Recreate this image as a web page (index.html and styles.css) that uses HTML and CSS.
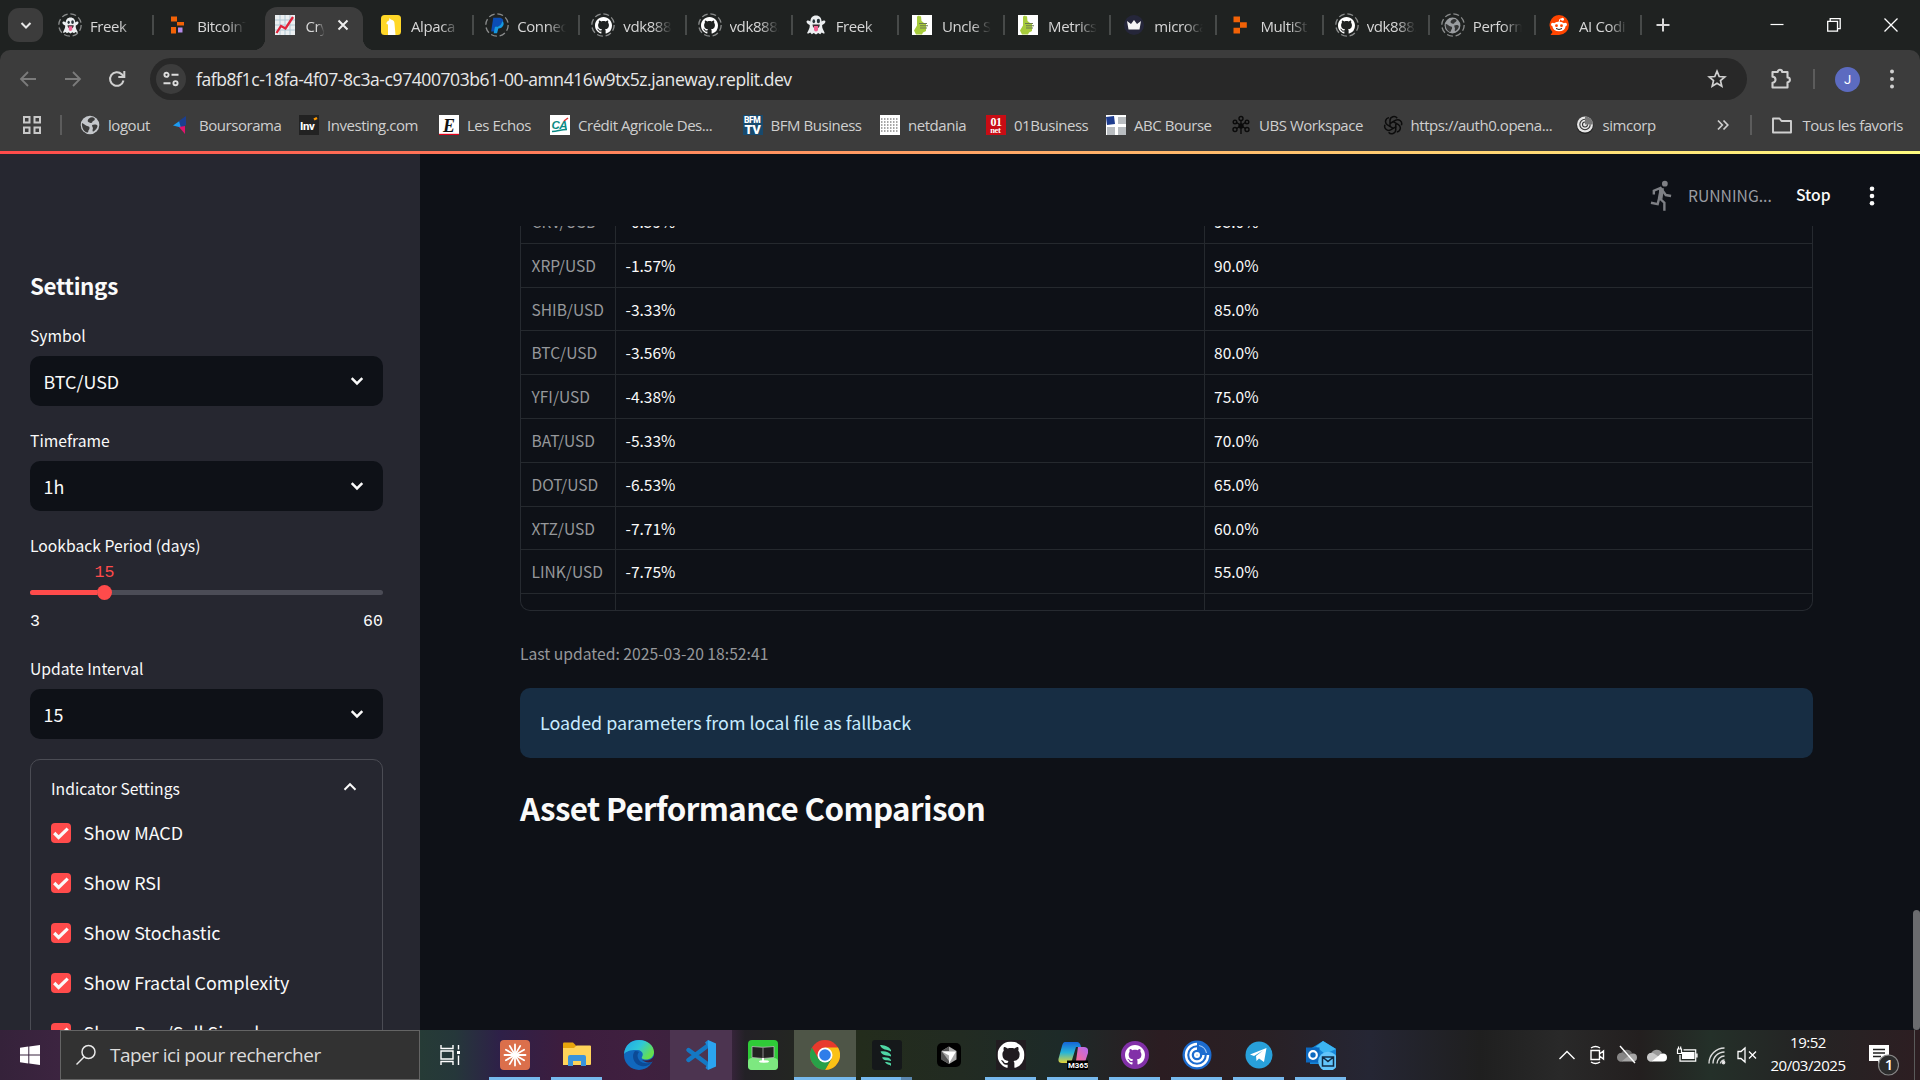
FILE: index.html
```html
<!DOCTYPE html>
<html lang="fr">
<head>
<meta charset="utf-8">
<title>Crypto dashboard</title>
<link rel="stylesheet" href="styles.css">
</head>
<body>
<svg class="defs" width="0" height="0" aria-hidden="true">
  <defs>
    <symbol id="github" viewBox="0 0 16 16"><path fill="#fff" d="M8 0C3.58 0 0 3.58 0 8c0 3.54 2.29 6.53 5.47 7.59.4.07.55-.17.55-.38 0-.19-.01-.82-.01-1.49-2.01.37-2.53-.49-2.69-.94-.09-.23-.48-.94-.82-1.13-.28-.15-.68-.52-.01-.53.63-.01 1.08.58 1.23.82.72 1.21 1.87.87 2.33.66.07-.52.28-.87.51-1.07-1.78-.2-3.64-.89-3.64-3.95 0-.87.31-1.59.82-2.15-.08-.2-.36-1.02.08-2.12 0 0 .67-.21 2.2.82.64-.18 1.32-.27 2-.27s1.36.09 2 .27c1.53-1.04 2.2-.82 2.2-.82.44 1.1.16 1.92.08 2.12.51.56.82 1.27.82 2.15 0 3.07-1.87 3.75-3.65 3.95.29.25.54.73.54 1.48 0 1.07-.01 1.93-.01 2.2 0 .21.15.46.55.38A8.01 8.01 0 0 0 16 8c0-4.42-3.58-8-8-8z"/></symbol>
    <symbol id="ghost" viewBox="0 0 20 20"><path fill="#eceff1" d="M10 0.5c-3.6 0-5.6 2.6-5.6 6-1.2-.9-2.6-1.6-3.6-.6-1 1.1.6 2.6 2.9 4.2.4 3-1.2 4.800-2.400 7.500-.3.8.4 1.300 1.200.800l1.700-.9 1.600 1.700 2-1.300 2.200 1.500 2.200-1.500 2 1.300 1.600-1.700 1.500.9c.8.400 1.500-.1 1.200-.8-1.200-2.700-2.700-4.500-2.300-7.500 2.300-1.600 3.900-3.100 2.900-4.200-1-1-2.400-.3-3.500.6 0-3.400-2-6-5.600-6z"/><ellipse cx="7.800" cy="6.300" rx="1.300" ry="2" fill="#263238"/><ellipse cx="12.400" cy="6" rx="1.600" ry="2.300" fill="#263238"/><path fill="#3b2b30" d="M6.500 9.600h7.300c0 2.800-1.500 4-3.600 4s-3.700-1.400-3.700-4z"/><path fill="#f06292" d="M8 11h4v3.500a2 2 0 0 1-4 0z"/></symbol>
    <symbol id="ring" viewBox="0 0 24 24"><circle cx="12" cy="12" r="11.200" fill="none" stroke="#8a8c8c" stroke-width="1.300" stroke-dasharray="6 2.800"/></symbol>
    <symbol id="globe" viewBox="0 0 20 20"><circle cx="10" cy="10" r="9.300" fill="#c4c7cb"/><path fill="#3c3c3c" d="M2 8c3 1 3.500 3 6 3.200 2 0 2 3 .4 4.200 0 1.500-.4 2-1.400 2.200C3.500 16.500 1.500 12 2 8zM9 3.500c2-1.500 4-1.400 5.500-.3 1 1.500-.5 2.500-2 3.200-.5 2.200-3 1.700-4.200.7C7 6 8 4.500 9 3.500zM12 10c2-1 5-.8 5.500.8 0 2.500-2.500 5-4.500 6-1.200-1.800.8-3-.6-4.700z"/></symbol>
    <symbol id="replit" viewBox="0 0 20 20"><path fill="#f26207" d="M3.500 1.500h6.500v5.700H3.500zM10 7.200h6.800v5.600H10zM3.500 12.800h6.500v5.700H3.500z"/></symbol>
    <symbol id="lime" viewBox="0 0 20 20"><path fill="#fff" d="M0 0h20v20H0z"/><path fill="#a8cc3c" d="M5 1.500l2-1 1 1 1-.5.500 5 2.500 2 2 1v7l-3 1.500-1 2H4l-2-4 3-5V6z"/><path fill="#6c7a50" d="M7 8h8v1H7zm1 2.200h8v1H8zm0 2.200h7v1H8z"/></symbol>
    <symbol id="chev" viewBox="0 0 16 16"><path d="M2.700 5.200L8 10.400l5.300-5.200" fill="none" stroke="#fafafa" stroke-width="2.500"/></symbol>
    <symbol id="check" viewBox="0 0 20 20"><path d="M3.200 10l4.400 4.400L16.700 5.600" fill="none" stroke="#fafafa" stroke-width="3.200"/></symbol>
    <symbol id="cloud" viewBox="0 0 20 14"><path fill="#999" d="M4 6a6 6 0 0 1 11-1l-5 6H3z"/><path fill="#c8c8c8" d="M0 9.500A4.500 4.500 0 0 1 7 5.500l6 4-8 4A4 4 0 0 1 0 9.500z"/><path fill="#fff" d="M4.500 13.500H16a4 4 0 0 0 0-8c-2-.2-3 .8-4 2z"/></symbol>
  </defs>
</svg>
<div class="screen">
  <header class="browser">
    <div class="tabstrip">
      <div class="tabsearch"><svg width="14" height="14" viewBox="0 0 14 14"><path d="M2.500 5L7 9.500 11.500 5" fill="none" stroke="#e8e8e8" stroke-width="2"/></svg></div>
      <div class="tabs">
        <div class="tab"><span class="fav"><svg class="r"><use href="#ring"/></svg><svg class="s"><use href="#ghost"/></svg></span><span class="title">Freek</span></div>
        <div class="tab nosep"><span class="fav"><svg class="f" viewBox="0 0 20 20"><path fill="#f26207" d="M4 1.500h6v5H4zM10 7h7v3.500h-7zM4 12h5v6.500H4z"/><path fill="#b48bea" d="M11 12.500h4.500v5H11z"/></svg></span><span class="title">BitcoinT</span></div>
        <div class="tab active"><span class="fav"><svg class="f" viewBox="0 0 20 20"><path fill="#eceff1" d="M0 0h20v20H0z"/><path d="M5 0v20M10 0v20M15 0v20M0 5h20M0 10h20M0 15h20" stroke="#b0c8d4" stroke-width="1"/><path d="M1.500 18l4.500-7 4.500 2.500L18 2" fill="none" stroke="#e0243c" stroke-width="2.300"/></svg></span><span class="title">Cry</span><svg class="close" viewBox="0 0 12 12"><path d="M1.500 1.500l9 9m0-9l-9 9" stroke="#eee" stroke-width="2"/></svg></div>
        <div class="tab"><span class="fav"><svg class="f" viewBox="0 0 20 20"><rect width="20" height="20" rx="3.500" fill="#ffd728"/><path fill="#fff" d="M7 20V9.500L5.500 9c-.3-2 1-3 2.500-3.500L8.500 3l1.300 1.500c2.200.3 3.700 1.500 3.700 4L14.500 20z"/></svg></span><span class="title">Alpaca</span></div>
        <div class="tab"><span class="fav"><svg class="r"><use href="#ring"/></svg><svg class="s" viewBox="0 0 20 20"><path fill="#0b4db5" d="M5 1h7c4 0 5.500 3 4.500 6s-4 4-7 4L8 17H2.500z"/><path fill="#1599e0" d="M15.500 5c2 1 2 3 1.500 4.500-1 3-3.500 4-6 4L9.500 19H5.500L7 11.500c4 0 7.500-1 8.500-6.500z"/></svg></span><span class="title">Connec</span></div>
        <div class="tab"><span class="fav"><svg class="r"><use href="#ring"/></svg><svg class="s"><use href="#github"/></svg></span><span class="title">vdk888/</span></div>
        <div class="tab"><span class="fav"><svg class="r"><use href="#ring"/></svg><svg class="s"><use href="#github"/></svg></span><span class="title">vdk888/</span></div>
        <div class="tab"><span class="fav"><svg class="f"><use href="#ghost"/></svg></span><span class="title">Freek</span></div>
        <div class="tab"><span class="fav"><svg class="f"><use href="#lime"/></svg></span><span class="title">Uncle S</span></div>
        <div class="tab"><span class="fav"><svg class="f"><use href="#lime"/></svg></span><span class="title">Metrics</span></div>
        <div class="tab"><span class="fav"><svg class="f" viewBox="0 0 20 20"><circle cx="10" cy="10" r="10" fill="#25263a"/><path fill="#f4f4f4" d="M3 6l4 3 3-4 3 4 4-3-1.500 8.500h-11z"/></svg></span><span class="title">microca</span></div>
        <div class="tab"><span class="fav"><svg class="f"><use href="#replit"/></svg></span><span class="title">MultiSt</span></div>
        <div class="tab"><span class="fav"><svg class="r"><use href="#ring"/></svg><svg class="s"><use href="#github"/></svg></span><span class="title">vdk888/</span></div>
        <div class="tab"><span class="fav"><svg class="r"><use href="#ring"/></svg><svg class="s dim"><use href="#globe"/></svg></span><span class="title">Perform</span></div>
        <div class="tab"><span class="fav"><svg class="f" viewBox="0 0 20 20"><path fill="#ff4500" d="M10 0a10 10 0 1 1 0 20H1.500l2-3A10 10 0 0 1 10 0z"/><ellipse cx="10" cy="11.500" rx="6.500" ry="4.800" fill="#fff"/><circle cx="3.800" cy="9.500" r="1.800" fill="#fff"/><circle cx="16.200" cy="9.500" r="1.800" fill="#fff"/><circle cx="13.500" cy="4.300" r="1.500" fill="#fff"/><path d="M10 7l1-3 2 .4" stroke="#fff" fill="none"/><circle cx="7.500" cy="10.700" r="1.400" fill="#ff4500"/><circle cx="12.500" cy="10.700" r="1.400" fill="#ff4500"/><path d="M7 13.500q3 2 6 0" stroke="#222" fill="none"/></svg></span><span class="title">AI Codi</span></div>
      </div>
      <svg class="plus" viewBox="0 0 14 14"><path d="M7 0.500v13M.5 7h13" stroke="#d8d8d8" stroke-width="2"/></svg>
      <div class="winbtns">
        <svg viewBox="0 0 14 14"><path d="M.5 6.500h13" stroke="#fff" stroke-width="1.200"/></svg>
        <svg viewBox="0 0 14 14"><path d="M.7 3.300h9.800v9.800H.7zM3.200 3V.7h10v10h-2.500" fill="none" stroke="#fff" stroke-width="1.300"/></svg>
        <svg viewBox="0 0 14 14"><path d="M.5.5l13 13m0-13l-13 13" stroke="#fff" stroke-width="1.300"/></svg>
      </div>
    </div>
    <div class="toolbar">
      <svg class="nav off" viewBox="0 0 20 20"><path d="M18 10H3m7-7l-7 7 7 7" fill="none" stroke="#7b7b7b" stroke-width="1.800"/></svg>
      <svg class="nav off" viewBox="0 0 20 20"><path d="M2 10h15m-7-7l7 7-7 7" fill="none" stroke="#7b7b7b" stroke-width="1.800"/></svg>
      <svg class="nav" viewBox="0 0 20 20"><path d="M16.500 11.500a6.800 6.800 0 1 1-1.800-6.300l2 2.100" fill="none" stroke="#d0d0d0" stroke-width="2"/><path d="M17.300 2v6h-6" fill="none" stroke="#d0d0d0" stroke-width="2"/></svg>
      <div class="omnibox">
        <span class="site"><svg width="18" height="18" viewBox="0 0 18 18" fill="none" stroke="#dcdcdc" stroke-width="1.900"><circle cx="4.500" cy="4.800" r="2.100"/><path d="M9.500 4.800h7M1.500 13.200h7"/><circle cx="13.500" cy="13.200" r="2.100"/></svg></span>
        <span class="url">fafb8f1c-18fa-4f07-8c3a-c97400703b61-00-amn416w9tx5z.janeway.replit.dev</span>
        <svg class="star" viewBox="0 0 20 20"><path d="M10 2.200l2.200 5.300 5.600.4-4.300 3.700 1.300 5.600-4.800-3-4.800 3 1.300-5.600L2.200 7.900l5.600-.4z" fill="none" stroke="#d0d0d0" stroke-width="1.700"/></svg>
      </div>
      <svg class="puzzle" viewBox="0 0 22 22"><path d="M2.500 4h5.200a2.200 2.200 0 0 1 4.400 0h5.400v5.500a2.400 2.400 0 0 1 0 4.800v5.200h-15v-4.800a3 3 0 0 0 0-6z" fill="none" stroke="#d0d0d0" stroke-width="2.100" stroke-linejoin="round"/></svg>
      <i class="vsep"></i>
      <span class="avatar">J</span>
      <svg class="kebab" viewBox="0 0 6 20"><circle cx="3" cy="2.500" r="2" fill="#d0d0d0"/><circle cx="3" cy="10" r="2" fill="#d0d0d0"/><circle cx="3" cy="17.500" r="2" fill="#d0d0d0"/></svg>
    </div>
    <nav class="bookmarks">
      <svg class="apps" viewBox="0 0 20 20" fill="none" stroke="#c8c8c8" stroke-width="2"><path d="M2 2h5.500v5.500H2zM12.500 2H18v5.500h-5.500zM2 12.500h5.500V18H2zM12.500 12.500H18V18h-5.500z"/></svg>
      <i class="vsep"></i>
      <a><svg class="f"><use href="#globe"/></svg>logout</a>
      <a><svg class="f" viewBox="0 0 20 20"><path fill="#1d9bf0" d="M2 10.500l8-5.500v7.500z"/><path fill="#1b3f8f" d="M8 6l7-5v9l-5 3z"/><path fill="#e0146e" d="M8 12l6-1v8z"/></svg>Boursorama</a>
      <a><svg class="f" viewBox="0 0 20 20"><path fill="#222" d="M0 0h20v20H0z"/><text x="1" y="15" font-family="Roboto" font-weight="700" font-size="11.500" fill="#fff">Inv</text><path d="M15 4.500l3-1.500" stroke="#f90" stroke-width="2.500"/></svg>Investing.com</a>
      <a><svg class="f" viewBox="0 0 20 20"><path fill="#fff" d="M0 0h20v20H0z"/><path fill="#e2001a" d="M0 18.800h20V20H0z"/><text x="4" y="16.500" font-family="Liberation Serif" font-weight="700" font-style="italic" font-size="18" fill="#111">E</text></svg>Les Echos</a>
      <a><svg class="f" viewBox="0 0 20 20"><path fill="#fff" d="M0 0h20v20H0z"/><text x="1.500" y="13.500" font-family="Liberation Sans" font-weight="700" font-style="italic" font-size="11.500" fill="#0a8a84">CA</text><path d="M2 16.500c6 0 8-2 15-2" stroke="#0a8a84" stroke-width="1.500" fill="none"/><path d="M14 6l4-3" stroke="#d33" stroke-width="1.500"/></svg>Crédit Agricole Des...</a>
      <a><svg class="f" viewBox="0 0 20 20"><path fill="#174a6e" d="M0 0h20v20H0z"/><text x="1" y="7.600" font-family="Roboto" font-weight="900" font-size="8.500" fill="#fff">BFM</text><text x="1.500" y="19" font-family="Roboto" font-weight="900" font-size="13" fill="#fff">TV</text></svg>BFM Business</a>
      <a><svg class="f" viewBox="0 0 20 20"><path fill="#fff" d="M0 0h20v20H0z"/><path d="M1 4h18M1 7h18M1 10h18M1 13h18M1 16h18" stroke="#888" stroke-width="1.300" stroke-dasharray="1.500 1.500"/></svg>netdania</a>
      <a><svg class="f" viewBox="0 0 20 20"><path fill="#c90c14" d="M0 0h20v20H0z"/><text x="4.500" y="11" font-family="Liberation Serif" font-weight="700" font-size="12" fill="#fff">01</text><text x="4.300" y="18" font-family="Liberation Serif" font-weight="700" font-size="8.500" fill="#fff">net</text></svg>01Business</a>
      <a><svg class="f" viewBox="0 0 20 20"><path fill="#fff" d="M0 0h20v20H0z"/><path fill="#b8bcc0" d="M12 2h8v7h-8zM1 12h8v8H1zM12 12h8v8h-8z"/><path fill="#1f3d8f" d="M0 2l8-1 1 8-8 1z"/></svg>ABC Bourse</a>
      <a><svg class="f" viewBox="0 0 20 20" fill="none" stroke="#0b0b0b" stroke-width="1.400"><circle cx="10" cy="3.500" r="2"/><path d="M10 5v14M5 7l10 7M15 7L5 14"/><circle cx="4" cy="7" r="1.800"/><circle cx="16" cy="7" r="1.800"/><circle cx="4" cy="14.500" r="2"/><circle cx="16" cy="14.500" r="2"/><circle cx="10" cy="11" r="2" fill="#0b0b0b"/></svg>UBS Workspace</a>
      <a><svg class="f" viewBox="0 0 20 20" fill="none" stroke="#0c0c0c" stroke-width="1.500"><g id="petal"><path d="M7 12V5.500a4 4 0 0 1 7.200-2.300M7 8.500l5.800-3.300a4 4 0 0 1 5.600 5"/></g><use href="#petal" transform="rotate(120 10 10)"/><use href="#petal" transform="rotate(240 10 10)"/></svg>https://auth0.opena...</a>
      <a><svg class="f" viewBox="0 0 20 20"><circle cx="10" cy="10.500" r="8.500" fill="#222"/><circle cx="10" cy="9.500" r="8" fill="#e6e6e6"/><path d="M10 9.500V1.500a8 8 0 0 1 8 8z" fill="#777"/><path d="M15.200 9.500A5.200 5.200 0 1 1 10 4.300M12.500 9.500A2.500 2.500 0 1 1 10 7" stroke="#333" stroke-width="1.100" fill="none"/></svg>simcorp</a>
      <svg class="more" viewBox="0 0 12 12"><path d="M1 1.500L5.300 6 1 10.500M6.500 1.500L10.800 6l-4.300 4.500" fill="none" stroke="#d0d0d0" stroke-width="1.700"/></svg>
      <i class="vsep"></i>
      <a class="all"><svg class="f" viewBox="0 0 20 20"><path d="M1 3.500h6.500l2 2.500H19v11.500H1z" fill="none" stroke="#d0d0d0" stroke-width="1.900" stroke-linejoin="round"/></svg>Tous les favoris</a>
    </nav>
  </header>

  <div class="decoration"></div>
  <div class="app">
    <aside class="sidebar">
      <h2>Settings</h2>
      <label>Symbol</label>
      <div class="select">BTC/USD<svg><use href="#chev"/></svg></div>
      <label>Timeframe</label>
      <div class="select">1h<svg><use href="#chev"/></svg></div>
      <label>Lookback Period (days)</label>
      <div class="slider">
        <span class="value">15</span>
        <div class="track"><i class="fill"></i><i class="thumb"></i></div>
        <div class="range"><span>3</span><span>60</span></div>
      </div>
      <label>Update Interval</label>
      <div class="select">15<svg><use href="#chev"/></svg></div>
      <section class="expander">
        <div class="summary">Indicator Settings<svg viewBox="0 0 16 16"><path d="M2.500 10.700L8 5.200l5.500 5.500" fill="none" stroke="#fafafa" stroke-width="2"/></svg></div>
        <div class="opt"><i><svg><use href="#check"/></svg></i><span>Show MACD</span></div>
        <div class="opt"><i><svg><use href="#check"/></svg></i><span>Show RSI</span></div>
        <div class="opt"><i><svg><use href="#check"/></svg></i><span>Show Stochastic</span></div>
        <div class="opt"><i><svg><use href="#check"/></svg></i><span>Show Fractal Complexity</span></div>
        <div class="opt"><i><svg><use href="#check"/></svg></i><span>Show Buy/Sell Signals</span></div>
      </section>
    </aside>
    <main class="main">
      <div class="status">
        <svg class="runner" viewBox="0 0 24 32"><circle cx="15.500" cy="3.200" r="3" fill="#7e8085"/><path d="M4 14.500V10.500l7-3 3 4 2.500 3.500 5.500 1M11.500 9L9.500 18l5.500 5v8.500M9.500 18.500L8 24.500l-7-1.500" fill="none" stroke="#7e8085" stroke-width="2.500"/><path fill="#7e8085" d="M9.500 8h5l-1.500 11-4-.5z"/></svg>
        <span class="running">RUNNING...</span>
        <span class="stop">Stop</span>
        <svg class="dots" viewBox="0 0 6 20"><circle cx="3" cy="2.700" r="2.300" fill="#fafafa"/><circle cx="3" cy="10" r="2.300" fill="#fafafa"/><circle cx="3" cy="17.300" r="2.300" fill="#fafafa"/></svg>
      </div>
      <div class="content">
        <div class="gridwrap">
          <div class="grid">
            <span>CRV/USD</span><span>-0.59%</span><span>95.0%</span>
            <span>XRP/USD</span><span>-1.57%</span><span>90.0%</span>
            <span>SHIB/USD</span><span>-3.33%</span><span>85.0%</span>
            <span>BTC/USD</span><span>-3.56%</span><span>80.0%</span>
            <span>YFI/USD</span><span>-4.38%</span><span>75.0%</span>
            <span>BAT/USD</span><span>-5.33%</span><span>70.0%</span>
            <span>DOT/USD</span><span>-6.53%</span><span>65.0%</span>
            <span>XTZ/USD</span><span>-7.71%</span><span>60.0%</span>
            <span>LINK/USD</span><span>-7.75%</span><span>55.0%</span>
            <span>AAVE/USD</span><span></span><span></span>
          </div>
        </div>
        <p class="updated">Last updated: 2025-03-20 18:52:41</p>
        <div class="info">Loaded parameters from local file as fallback</div>
        <h1>Asset Performance Comparison</h1>
      </div>
      <i class="scrollbar"></i>
    </main>
  </div>

  <footer class="taskbar">
    <div class="start"><svg width="20" height="20" viewBox="0 0 20 20"><path fill="#fff" d="M0 2.800L8.300 1.600v8H0zM9.300 1.500L20 0v9.600H9.300zM0 10.500h8.300v8L0 17.300zM9.300 10.500H20V20L9.300 18.600z"/></svg></div>
    <div class="search"><svg width="22" height="22" viewBox="0 0 22 22"><circle cx="13.500" cy="8" r="6.500" fill="none" stroke="#e8e8e8" stroke-width="1.500"/><path d="M9 13L1.500 20.500" stroke="#e8e8e8" stroke-width="1.500"/></svg>Taper ici pour rechercher</div>
    <div class="taskview"><svg width="21" height="20" viewBox="0 0 21 20" fill="none" stroke="#fff" stroke-width="1.400"><path d="M1 0v3.500h12V0M1 20v-3.500h12V20M1 6h12v8H1zM18.500 0v4.500M18.500 10.500V20"/><path fill="#fff" stroke="none" d="M17 6h3v3h-3z"/></svg></div>
    <div class="pinned">
      <div class="ic run"><svg viewBox="0 0 30 30"><rect width="30" height="30" rx="4" fill="#db6f4b"/><g stroke="#fff" stroke-width="1.800" stroke-linecap="round"><path id="ray" d="M15 4.500v21M4.500 15h21"/><use href="#ray" transform="rotate(30 15 15)"/><use href="#ray" transform="rotate(60 15 15)"/></g></svg></div>
      <div class="ic run"><svg viewBox="0 0 30 30"><path fill="#e8a50c" d="M1 3.500q0-1 1-1h9l3 3v4H1z"/><path fill="#ffd35a" d="M1 8h11l2.500-2.500H28q1 0 1 1V24q0 1-1 1H1z"/><path fill="#3a94dc" d="M6 26V17q0-2 2-2h14q2 0 2 2v9h-5v-5h-8v5z"/></svg></div>
      <div class="ic"><svg viewBox="0 0 30 30"><defs><linearGradient id="eg" x1="0" y1="0" x2="1" y2="0.500"><stop offset="0" stop-color="#1fa5ea"/><stop offset=".55" stop-color="#2fc7d8"/><stop offset="1" stop-color="#66e04e"/></linearGradient></defs><circle cx="15" cy="15" r="15" fill="#1168bd"/><path fill="url(#eg)" d="M0 14C1 5 7 0 15 0c9 0 15 6 15 12 0 5-4 7.500-8 7.500-3 0-5-1-4-2.500 2-3 0-6.500-4-7C8 9.500 2 11 0 14z"/><path fill="#0c4a96" d="M11 11c-4 4-2 13 6 15 5 1 9-1 11-4-4 2-10 2-13-2-2-3-2-6 0-8-1-1-3-1-4-1z"/><path fill="#3d1f40" d="M30.500 13c0 5-4 7.500-8.500 7.500-2 0-4-.5-4.500-1.500 2 3.500 8 4.500 11.500 2.500l2-3z"/></svg></div>
      <div class="ic lit"><svg viewBox="0 0 30 30"><path d="M2.500 10L22 24.500M2.500 20L22 5.500" stroke="#1478c4" stroke-width="4.400" stroke-linecap="round"/><path fill="#2ba4f0" d="M22 0l8 3.500v23L22 30z"/><path fill="#1b87d6" d="M22 0v30l-2.500-2 2.500-5V7l-3-4.500z"/></svg></div>
      <div class="ic"><svg viewBox="0 0 30 30"><rect width="30" height="30" rx="4" fill="#2fcb38"/><rect y="18" width="30" height="12" rx="4" fill="#7de880"/><path fill="#222" stroke="#bbb" stroke-width=".8" d="M4 6.500l11 .8 11-.8v11l-11 1-11-1z"/><path d="M15 7v12" stroke="#888"/><path d="M15 18v3.500" stroke="#fff" stroke-width="2"/><ellipse cx="16" cy="21.500" rx="5" ry="1.200" fill="#fff"/></svg></div>
      <div class="ic run on"><svg viewBox="0 0 30 30"><circle cx="15" cy="15" r="15" fill="#e8392c"/><path fill="#fbc116" d="M15 7.500h13A15 15 0 0 1 15 30l6.500-11.250z"/><path fill="#28a048" d="M2 7.500A15 15 0 0 0 15 30l6.500-11.250H8.500z"/><circle cx="15" cy="15" r="7.500" fill="#fff"/><circle cx="15" cy="15" r="5.800" fill="#2f7de9"/></svg></div>
      <div class="ic run two"><svg viewBox="0 0 30 30"><rect width="30" height="30" rx="3" fill="#15181a"/><path fill="#4fd6a4" d="M8 5c3 0 9 1 11 5v1.500C15 9 10 10.500 8 5zM8.500 11.500c4-1 9 .5 10.500 3.500v1.500c-3-1.500-9-.5-10.500-5zM10 17.500c4-.5 7.500 0 9 2.500v1c-3-1-7.500 0-9-3.500zM13 22c2.500 0 5 .5 6 1.500V26c-1-1.500-5-1.500-6-4z"/></svg></div>
      <div class="ic"><svg viewBox="0 0 30 30"><rect x="3" y="3" width="24" height="24" rx="5" fill="#000"/><path fill="#aaa" d="M15 6.500l7.500 4.500v8.500L15 24l-7.500-4.500V11z"/><path fill="#555" d="M15 6.500V11H7.500zM7.500 11v8.500L15 24v-3z"/><path fill="#fff" d="M8 11.500h14L15 23.500v-8z"/></svg></div>
      <div class="ic run"><svg viewBox="0 0 30 30"><path fill="#211c20" d="M0 0h30v30H0z"/><use href="#github" x="1.500" y="1.500" width="27" height="27"/></svg></div>
      <div class="ic run"><svg viewBox="0 0 30 30"><defs><linearGradient id="m1" x1="0" y1="0" x2="0" y2="1"><stop offset="0" stop-color="#1565d8"/><stop offset=".5" stop-color="#27b4d8"/><stop offset="1" stop-color="#e5d334"/></linearGradient><linearGradient id="m2" x1="1" y1="0" x2="0" y2="1"><stop offset="0" stop-color="#b06cf5"/><stop offset=".6" stop-color="#f06aa5"/><stop offset="1" stop-color="#ff9a4d"/></linearGradient></defs><path fill="url(#m1)" d="M7 2h12q3 0 4 5h-5l-4 13q-1 3-4 3H4q-5 0-3-6l3-11q1-4 3-4z"/><path fill="url(#m2)" d="M20 7h6q5 0 4 6l-3 9q-1 4-5 4h-9q4-1 5-5z"/><path fill="#000" d="M9 20.500h21V30H9z"/><text x="10" y="28" font-family="Roboto" font-weight="700" font-size="7.800" fill="#fff">M365</text></svg></div>
      <div class="ic run"><svg viewBox="0 0 30 30"><circle cx="15" cy="15" r="14" fill="#8230a8"/><use href="#github" x="5" y="5" width="20" height="20"/></svg></div>
      <div class="ic run"><svg viewBox="0 0 30 30"><circle cx="15" cy="15" r="14.500" fill="#1c6cd0"/><g fill="none" stroke="#fff" stroke-width="2.400"><path d="M15 4A11 11 0 1 0 26 15M15 8.500A6.500 6.500 0 1 0 21.500 15"/><circle cx="15" cy="15" r="1.800"/></g><path d="M17 5.500a9.700 9.700 0 0 1 7.500 7.500" fill="none" stroke="#9cc4f2" stroke-width="1.200"/></svg></div>
      <div class="ic run"><svg viewBox="0 0 30 30"><circle cx="15" cy="15" r="13.500" fill="#28a0da"/><path fill="#fff" d="M6 14.500L22.500 8 20 22l-5-3.500-2.500 2.500-.5-5 7-5.500-9 5.500z"/></svg></div>
      <div class="ic run"><svg viewBox="0 0 30 30"><path fill="#1686d8" d="M4 9L17 1l13 8v15H4z"/><path fill="#3cb5f2" d="M10 6.500L17 1l13 8-11 5z"/><path fill="#0c69c0" d="M0 7.500h13.500v15H0z"/><circle cx="7" cy="15" r="3.800" fill="none" stroke="#fff" stroke-width="2.200"/><circle cx="22" cy="21.500" r="9.800" fill="#62c4fa"/><path d="M16.500 17h11v9h-11zl5.500 4.500 5.500-4.500" fill="none" stroke="#102a44" stroke-width="1.500"/></svg></div>
    </div>
    <div class="tray">
      <svg viewBox="0 0 22 22"><path d="M3.500 15L11 7.500l7.500 7.500" fill="none" stroke="#fff" stroke-width="1.400"/></svg>
      <svg viewBox="0 0 22 22" fill="none" stroke="#fff" stroke-width="1.400"><path d="M5 6.500h8.500v9H5zM13.500 10l4-3v8l-4-3M5 4q4.500-3 9 0M5 18q4.500 3 9 0"/></svg>
      <svg viewBox="0 0 22 22"><use href="#cloud" x="1" y="4" width="20" height="14" opacity=".6"/><path d="M4 2l15 17" stroke="#fff" stroke-width="1.400"/></svg>
      <svg viewBox="0 0 22 22"><use href="#cloud" x="1" y="4" width="20" height="14"/></svg>
      <svg viewBox="0 0 22 22"><path fill="#fff" d="M6 8h12.500v7H6z"/><path d="M7.500 5.800h12.200v11.400H4V11M1.500 5v4.500h4V5zM2.500 2.500V5M4.700 2.500V5M21 9.500v4" fill="none" stroke="#fff" stroke-width="1.200"/></svg>
      <svg viewBox="0 0 22 22" fill="none" stroke="#ddd" stroke-width="1.400"><path d="M3 19.500C3 11 10 4 18.500 4M7 19.500C7 13 12 8 18.500 8M11 19.500c0-4 3.500-7.500 7.500-7.500M14.500 19.500c0-2 2-3.500 4-3.500"/><circle cx="17.500" cy="18.500" r="1.200" fill="#fff"/></svg>
      <svg viewBox="0 0 22 22" fill="none" stroke="#fff" stroke-width="1.300"><path d="M2 7.500h3l4-3.500v14l-4-3.500H2zM13 7.500l7 7m0-7l-7 7"/></svg>
    </div>
    <div class="clock"><span>19:52</span><span>20/03/2025</span></div>
    <div class="notif"><svg width="30" height="32" viewBox="0 0 30 32"><path fill="#fff" d="M0 1h20v16h-7l-4 4v-4H0z"/><path d="M4 5.500h12M4 9h12M4 12.500h8" stroke="#222" stroke-width="1.300"/><circle cx="19.500" cy="21" r="10" fill="#2c2c2c" stroke="#888" stroke-width="1.200"/></svg><b>1</b></div>
    <i class="peek"></i>
  </footer>
</div>
</body>
</html>
```
FILE: styles.css
```css
* { box-sizing: border-box; }
body { margin: 0; background: #0e1117; overflow: hidden; }
.defs { position: absolute; }
.screen {
  width: 1920px; height: 1080px; display: flex; flex-direction: column; overflow: hidden;
  font-family: "Open Sans", "Noto Sans", sans-serif;
}
svg { flex: none; display: block; }
i { font-style: normal; flex: none; }

/* Browser chrome */
.browser { height: 151px; background: #202322; color: #d6d6d6; font-size: 15px; flex: none; }
.tabstrip { height: 50px; display: flex; align-items: center; padding-left: 8px; background: #1f2221; }
.tabsearch { width: 35px; height: 34px; border-radius: 11px; background: #3c3c3c; display: grid; place-items: center; }
.tabs { display: flex; margin-left: 5px; align-self: stretch; }
.tab { width: 106.2px; display: flex; align-items: center; padding-left: 11px; position: relative; }
.tab:first-child { padding-left: 10px; }
.tab:not(.active):not(.nosep) { background: linear-gradient(#474a49, #474a49) right 15px / 2px 20px no-repeat; }
.fav { width: 24px; height: 24px; display: grid; place-items: center; flex: none; }
.fav svg { grid-area: 1 / 1; }
.fav .r { width: 24px; height: 24px; }
.fav .s { width: 17px; height: 17px; }
.dim { opacity: .75; }
.f { width: 20px; height: 20px; }
.title {
  margin-left: 8px; width: 50px; overflow: hidden; white-space: nowrap; letter-spacing: -.4px; line-height: 24px; padding-top: 1px;
  -webkit-mask-image: linear-gradient(90deg, #000 60%, transparent 98%); mask-image: linear-gradient(90deg, #000 60%, transparent 98%);
}
.tab.active { width: 98px; margin: 7px 4.600px 0 5px; height: 43px; background: #3c3c3c; border-radius: 12px 12px 0 0; padding: 0 0 7px 8px; }
.tab.active .title { width: 20px; }
.tab.active::before, .tab.active::after { content: ""; position: absolute; bottom: 0; width: 12px; height: 12px; }
.tab.active::before { left: -12px; background: radial-gradient(circle at 0 0, transparent 12px, #3c3c3c 12.500px); }
.tab.active::after { right: -12px; background: radial-gradient(circle at 100% 0, transparent 12px, #3c3c3c 12.500px); }
.close { width: 12px; height: 12px; margin-left: 12px; }
.plus { width: 14px; height: 14px; margin-left: 14px; }
.winbtns { margin-left: auto; display: flex; gap: 43px; padding-right: 22px; }
.winbtns svg { width: 14px; height: 14px; }

.toolbar { height: 58px; background: #3c3c3c; border-radius: 10px 10px 0 0; display: flex; align-items: center; padding-left: 18px; }
.nav { width: 20px; height: 20px; margin-right: 24.500px; }
.nav:nth-child(3) { margin-right: 23px; }
.omnibox { width: 1597px; height: 42px; border-radius: 21px; background: #282828; display: flex; align-items: center; padding: 0 20px 0 6px; }
.site { width: 30px; height: 30px; border-radius: 15px; background: #3c3c3c; display: grid; place-items: center; }
.url { margin-left: 10px; font-size: 17.500px; color: #e8e8e8; letter-spacing: -.42px; }
.star { width: 20px; height: 20px; margin-left: auto; }
.puzzle { width: 22px; height: 22px; margin-left: 23px; }
.vsep { width: 2px; height: 20px; background: #5c5c5c; }
.toolbar .vsep { margin-left: 21px; }
.avatar { width: 25px; height: 25px; border-radius: 13px; background: #5c6bc0; color: #fff; font: 13px/25px Roboto, sans-serif; text-align: center; margin-left: 20px; }
.kebab { width: 6px; height: 20px; margin-left: 29px; }

.bookmarks {
  height: 43px; background: #3c3c3c; display: grid; align-items: center; padding: 0 0 9px 22px; white-space: nowrap;
  grid-template-columns: 38px 20px 91px 128px 140px 111px 192.500px 137.500px 106px 120px 125px 151.500px 192px 142px 33px 22px 148px;
}
.bookmarks a { display: flex; align-items: center; gap: 8px; font-size: 15px; line-height: 20px; letter-spacing: -.46px; color: #cfcfcf; }
.bookmarks .all { gap: 11px; }
.apps { width: 20px; height: 20px; }
.more { width: 12px; height: 12px; }

/* Streamlit application */
.decoration { height: 3px; flex: none; background: linear-gradient(90deg, #ff4b4b, #fffd80); }
.app { height: 876px; flex: none; display: flex; font-family: "Noto Sans CJK JP", "Noto Sans CJK SC", sans-serif; color: #fafafa; overflow: hidden; }
.sidebar { width: 420px; background: #262730; padding: 117px 37px 0 30px; flex: none; }
h1, h2, p { margin: 0; }
.sidebar h2 { font-size: 22.400px; line-height: 28px; font-weight: 600; height: 50px; letter-spacing: -.35px; }
label { display: block; height: 30px; margin-bottom: 5px; padding-top: 3px; font-size: 15.700px; line-height: 24px; }
.select { height: 50px; border-radius: 10px; background: #0e1117; display: flex; align-items: center; justify-content: space-between; padding: 0 18px 0 13.500px; font-size: 17.900px; line-height: 24px; margin-bottom: 20px; }
.select svg { width: 16px; height: 16px; }
.slider { height: 93px; margin-top: -5px; font: 16.600px/20px "Liberation Mono", monospace; }
.slider .value { display: block; width: 20px; margin-left: 64.500px; color: #ff4b4b; height: 29px; padding-top: 2px; }
.track { height: 5px; border-radius: 3px; background: #4b4c56; display: flex; align-items: center; }
.fill { width: 67px; height: 5px; border-radius: 3px 0 0 3px; background: #ff4b4b; }
.thumb { width: 15px; height: 15px; border-radius: 8px; background: #ff4b4b; }
.range { display: flex; justify-content: space-between; margin-top: 17px; }
.expander { height: 320px; border: 1px solid #4b4c54; border-radius: 10px; padding: 0 20px; }
.summary { height: 47.500px; padding-top: 11px; display: flex; justify-content: space-between; align-items: flex-start; font-size: 15.700px; line-height: 36px; }
.summary svg { width: 16px; height: 16px; margin: 8px 4.500px 0 0; }
.opt { height: 50px; display: flex; align-items: center; gap: 12.500px; font-size: 17.900px; line-height: 30px; }
.opt span { padding-bottom: 1px; }
.opt i { width: 20px; height: 20px; border-radius: 4px; background: #ff4b4b; }
.opt svg { width: 20px; height: 20px; }

.main { flex: 1; background: #0e1117; position: relative; }
.status { height: 72px; padding: 12px 45px 0 0; display: flex; justify-content: flex-end; align-items: center; font-size: 15.700px; line-height: 22px; }
.runner { width: 23px; height: 32px; margin-right: 15px; }
.running { color: #9a9ca2; width: 84px; padding-bottom: 1px; }
.stop { width: 34px; margin: 0 39px 0 24px; padding-bottom: 2px; font-weight: 500; }
.dots { width: 6px; height: 20px; }
.content { width: 1293px; margin-left: 100px; }
.gridwrap { height: 385px; overflow: hidden; border: 1px solid #262a30; border-top: 0; border-radius: 0 0 10px 10px; }
.grid { display: grid; grid-template-columns: 95px 588.500px 1fr; grid-auto-rows: 43.800px; margin-top: -26px; font-size: 15.550px; line-height: 42px; }
.grid span { border-bottom: 1px solid #25292e; border-right: 1px solid #25292e; padding-left: 9.500px; }
.grid span:nth-child(3n) { border-right: 0; }
.grid span:nth-child(3n+1) { color: #96989b; padding-left: 10.500px; }
.updated { margin-top: 30px; font-size: 15.700px; line-height: 26px; color: #96989b; }
.info { margin-top: 21px; height: 70px; border-radius: 10px; background: #172d43; color: #c7ebff; padding-left: 20px; font-size: 17.900px; line-height: 69px; }
.content h1 { margin-top: 29px; font-size: 31.300px; line-height: 42px; font-weight: 600; letter-spacing: -.62px; }
.scrollbar { position: absolute; right: 0; bottom: 0; width: 7px; height: 120px; border-radius: 4px; background: #6b6c6f; }

/* Windows taskbar */
.taskbar {
  height: 50px; flex: none; display: flex; align-items: stretch; color: #fff; position: relative;
  background: linear-gradient(90deg, #35223a 0, #3c2440 60px, #263b36 420px, #25373a 455px, #2e2048 500px, #3c1d3e 560px, #3f203f 640px, #38243c 730px, #232126 745px, #232c1c 860px, #222b22 960px, #1d2a28 1060px, #2b1d22 1160px, #292024 1260px, #252634 1370px, #1f1f1f 1480px, #292929 1560px, #231f1f 1640px, #243029 1710px, #242424 1800px, #2d1e22 1920px);
}
.start { width: 60px; display: grid; place-items: center; }
.search { width: 360px; background: #323232; border: 1px solid #646464; display: flex; align-items: center; padding-left: 14px; gap: 13px; font-size: 19px; letter-spacing: -.53px; color: #dcdcdc; }
.taskview { width: 61px; display: grid; place-items: center; }
.pinned { display: flex; margin-left: 2.500px; }
.ic { width: 62px; display: flex; justify-content: center; align-items: center; }
.ic > svg { width: 30px; height: 30px; }
.ic.run { background: linear-gradient(#76b9ed, #76b9ed) center bottom / 51px 3px no-repeat; }
.ic.lit { background: #4c3450; }
.ic.on { background: linear-gradient(#76b9ed, #76b9ed) bottom / 62px 3px no-repeat, #4e5547; }
.ic.two { background: linear-gradient(90deg, #76b9ed 78%, #5a86ad 78%) center bottom / 51px 3px no-repeat; }
.tray { margin-left: auto; display: flex; align-items: center; gap: 8px; }
.tray svg { width: 22px; height: 22px; }
.clock { width: 78px; margin-left: 11px; display: flex; flex-direction: column; font-size: 15px; line-height: 23px; padding-top: 1px; text-align: center; letter-spacing: -.45px; }
.notif { width: 73px; padding: 14px 0 0 22px; position: relative; }
.notif b { position: absolute; left: 36px; top: 24px; width: 12px; text-align: center; font-size: 15px; line-height: 20px; font-weight: 600; }
.peek { position: absolute; right: 5px; top: 0; width: 1px; height: 50px; background: #5a5a5a; }
```
